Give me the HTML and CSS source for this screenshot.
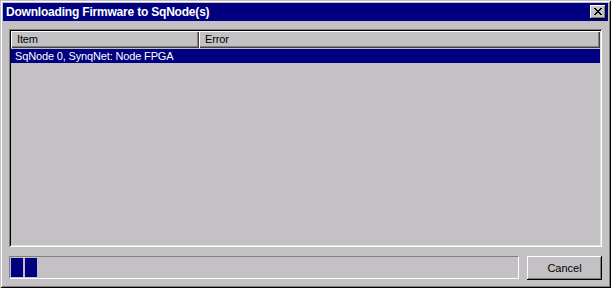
FILE: index.html
```html
<!DOCTYPE html>
<html lang="en">
<head>
    <meta charset="UTF-8">
    <title>Downloading Firmware to SqNode(s)</title>
    <link rel="stylesheet" href="styles.css">
</head>
<body>

<div class="window">
    <div class="titlebar">
        <span class="title">Downloading Firmware to SqNode(s)</span>
        <button class="close">
            <svg width="8" height="7" viewBox="0 0 8 7">
                <path d="M0 0h2v1h1v1h2v-1h1v-1h2v1h-1v1h-1v1h-1v1h1v1h1v1h1v1h-2v-1h-1v-1h-2v1h-1v1h-2v-1h1v-1h1v-1h1v-1h-1v-1h-1v-1h-1z" fill="#000"/>
            </svg>
        </button>
    </div>

    <div class="content">
        <div class="listview">
            <div class="header">
                <div class="col col-item">Item</div>
                <div class="col col-error">Error</div>
            </div>
            <div class="row selected">SqNode 0, SynqNet: Node FPGA</div>
        </div>

        <div class="footer">
            <div class="progress">
                <span class="block"></span>
                <span class="block"></span>
            </div>
            <button class="button">Cancel</button>
        </div>
    </div>
</div>

</body>
</html>
```

FILE: styles.css
```css
body {
    margin: 0;
    background-color: #c4c1c4;
    font-family: "Liberation Sans", Arial, sans-serif;
    font-size: 11px;
    letter-spacing: -0.15px;
}

.window {
    width: 611px;
    height: 288px;
    box-sizing: border-box;
    padding: 3px;
    background-color: #c4c1c4;
    box-shadow: inset 1px 1px 0 #c4c1c4, inset -1px -1px 0 #000,
                inset 2px 2px 0 #fff, inset -2px -2px 0 #808080;
    display: flex;
    flex-direction: column;
}

.titlebar {
    flex-shrink: 0;
    height: 18px;
    background-color: #000080;
    color: #fff;
    display: flex;
    align-items: center;
    justify-content: space-between;
    padding: 0 2px 0 3px;
}

.title {
    font-weight: bold;
    font-size: 12px;
    letter-spacing: -0.2px;
}

.close {
    width: 16px;
    height: 14px;
    padding: 0;
    border: none;
    background-color: #c4c1c4;
    box-shadow: inset -1px -1px 0 #000, inset 1px 1px 0 #fff,
                inset -2px -2px 0 #808080;
    display: flex;
    align-items: center;
    justify-content: center;
}

.close svg {
    display: block;
    margin-top: -1px;
}

.content {
    flex: 1;
    display: flex;
    flex-direction: column;
    padding: 8px 6px 5px 6px;
}

.listview {
    flex-shrink: 0;
    height: 218px;
    box-sizing: border-box;
    padding: 2px;
    background-color: #c4c1c4;
    box-shadow: inset 1px 1px 0 #808080, inset -1px -1px 0 #fff,
                inset 2px 2px 0 #000, inset -2px -2px 0 #dfdfdf;
}

.header {
    display: flex;
    height: 17px;
}

.col {
    box-sizing: border-box;
    height: 17px;
    line-height: 17px;
    padding-left: 6px;
    color: #000;
    box-shadow: inset 1px 1px 0 #fff, inset -1px -1px 0 #404040,
                inset -2px -2px 0 #808080;
}

.col-item {
    width: 188px;
}

.col-error {
    flex: 1;
}

.row {
    height: 14px;
    line-height: 14px;
    padding-left: 4px;
    margin-top: 1px;
}

.selected {
    background-color: #000080;
    color: #fff;
}

.footer {
    flex-shrink: 0;
    display: flex;
    gap: 8px;
    margin-top: 9px;
}

.progress {
    flex: 1;
    height: 23px;
    box-sizing: border-box;
    border-top: 1px solid #808080;
    border-left: 1px solid #808080;
    border-bottom: 1px solid #fff;
    border-right: 1px solid #fff;
    padding: 1px;
    display: flex;
    gap: 2px;
}

.block {
    width: 12px;
    height: 19px;
    background-color: #000080;
}

.button {
    width: 75px;
    height: 24px;
    padding: 0;
    border: none;
    background-color: #c4c1c4;
    font-family: "Liberation Sans", Arial, sans-serif;
    font-size: 11px;
    color: #000;
    box-shadow: inset -1px -1px 0 #000, inset 1px 1px 0 #fff,
                inset -2px -2px 0 #808080;
}
```
